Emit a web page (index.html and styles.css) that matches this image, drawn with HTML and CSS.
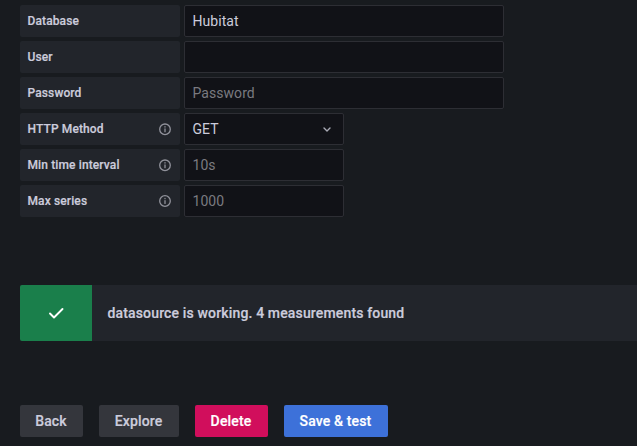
FILE: index.html
```html
<!DOCTYPE html>
<html lang="en"><head><meta charset="utf-8"><title>Data source settings</title><link rel="stylesheet" href="styles.css"></head>
<body>
<form class="fields">
<div class="row"><label class="label">Database</label><div class="input wide">Hubitat</div></div>
<div class="row"><label class="label">User</label><div class="input wide"></div></div>
<div class="row"><label class="label">Password</label><div class="input wide placeholder">Password</div></div>
<div class="row"><label class="label">HTTP Method<svg class="info" viewBox="0 0 14 14"><circle cx="7" cy="7.300" r="5.300"/><path d="M7 7v2.700M7 4.700v.3"/></svg></label><div class="input select">GET<svg class="chevron" viewBox="0 0 16 16"><path d="M5 7l3 3 3-3"/></svg></div></div>
<div class="row"><label class="label">Min time interval<svg class="info" viewBox="0 0 14 14"><circle cx="7" cy="7.300" r="5.300"/><path d="M7 7v2.700M7 4.700v.3"/></svg></label><div class="input placeholder">10s</div></div>
<div class="row"><label class="label">Max series<svg class="info" viewBox="0 0 14 14"><circle cx="7" cy="7" r="5.300"/><path d="M7 6.700v2.700M7 4.400v.3"/></svg></label><div class="input placeholder">1000</div></div>
</form>
<div class="alert"><div class="status"><svg class="check" viewBox="0 0 20 20"><path d="M4 10.500l4 4L16.500 6"/></svg></div><div class="message">datasource is working. 4 measurements found</div></div>
<div class="actions"><button class="button back">Back</button><button class="button explore">Explore</button><button class="button delete">Delete</button><button class="button save">Save &amp; test</button></div>
</body></html>
```
FILE: styles.css
```css
* { box-sizing: border-box; }
body { margin: 0; padding: 5px 0 0 20px; height: 446px; overflow: hidden; background: #181b1f; color: #ccccdc; font-family: Roboto, sans-serif; }
svg { fill: none; stroke: currentColor; stroke-linecap: round; stroke-linejoin: round; }
.fields { display: flex; flex-direction: column; gap: 4px; }
.row { display: flex; gap: 4px; height: 32px; }
.label { display: flex; align-items: center; justify-content: space-between; width: 160px; padding: 0 8px 0 7.5px; border-radius: 2px; background: #22252b; font-size: 12px; font-weight: 500; letter-spacing: 0.12px; -webkit-text-stroke: 0.2px currentColor; }
.info { width: 14px; height: 14px; color: #91929b; stroke-width: 1.3; }
.input { display: flex; align-items: center; justify-content: space-between; width: 160px; padding: 0 8px 0 7.5px; border: 1px solid #2d2e34; border-radius: 2px; background: #111217; font-size: 14px; letter-spacing: 0.05px; }
.wide { width: 320px; }
.placeholder { color: #7a7a80; }
.chevron { width: 16px; height: 16px; color: #a9aab5; stroke-width: 1.4; }
.alert { display: flex; height: 56px; margin-top: 68px; border-radius: 2px 0 0 2px; overflow: hidden; background: #22252b; }
.status { display: grid; place-items: center; width: 72px; background: #1a7f4b; color: #fff; }
.check { width: 20px; height: 20px; stroke-width: 1.9; }
.message { display: flex; align-items: center; padding-left: 15.5px; font-size: 14px; font-weight: 500; letter-spacing: 0.15px; -webkit-text-stroke: 0.2px currentColor; }
.actions { display: flex; gap: 16px; margin-top: 64px; }
.button { height: 32px; padding: 0 1px 0 0; border: 0; border-radius: 2px; color: #ccccdc; background: #34363c; font: 500 14px Roboto, sans-serif; letter-spacing: 0.15px; -webkit-text-stroke: 0.2px currentColor; }
.back { width: 63px; }
.explore { width: 80px; }
.delete { width: 73px; background: #d10e5c; color: #fff; }
.save { width: 104px; background: #3d71d9; color: #fff; }
```
